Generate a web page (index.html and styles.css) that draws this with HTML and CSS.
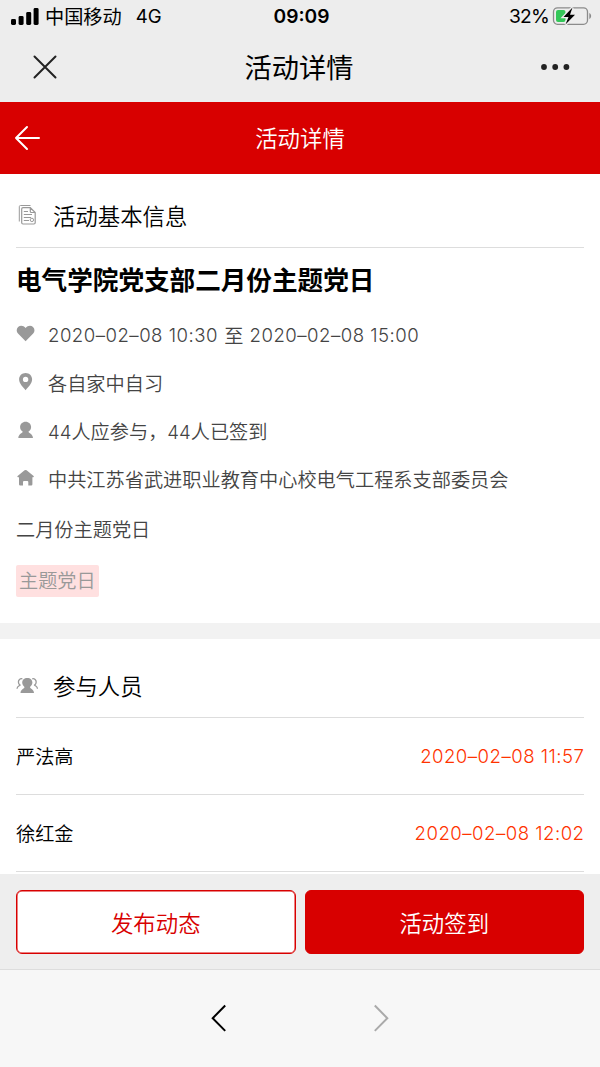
FILE: index.html
```html
<!DOCTYPE html>
<html lang="zh-CN">

<head>
  <meta charset="utf-8">
  <meta name="viewport" content="width=device-width, initial-scale=1">
  <title>活动详情</title>
  <link rel="stylesheet" href="styles.css">
</head>

<body>

  <div class="status-bar">
    <div class="status-left">
      <svg class="signal" width="28" height="17" viewBox="0 0 28 17">
        <rect x="0" y="11" width="5" height="6" rx="1.4" />
        <rect x="7.6" y="8" width="5" height="9" rx="1.4" />
        <rect x="15.2" y="4" width="5" height="13" rx="1.4" />
        <rect x="22.6" y="0" width="5" height="17" rx="1.4" />
      </svg>
      <span class="carrier">中国移动</span>
      <span class="network">4G</span>
    </div>
    <span class="clock">09:09</span>
    <div class="status-right">
      <span class="percent">32%</span>
      <svg class="battery" width="40" height="20" viewBox="0 0 40 20">
        <rect x="1.500" y="1.800" width="34" height="16.500" rx="4" fill="none" stroke="#8b8b8b" stroke-width="1.300" />
        <path d="M37.300 7c2.400 1 2.400 5 0 6z" fill="#8b8b8b" />
        <rect x="4" y="4" width="9.500" height="12" rx="2" fill="#34c759" />
        <path d="M20.500 1.500L11.500 11h5L13.500 18.500L23 8.800h-5z" fill="#000" stroke="#ededed" stroke-width="2.600" paint-order="stroke" />
      </svg>
    </div>
  </div>

  <div class="nav-bar">
    <svg width="26" height="26" viewBox="0 0 26 26">
      <path d="M2.500 2.500L23.500 23.500M23.500 2.500L2.500 23.500" fill="none" stroke="#222" stroke-width="2" stroke-linecap="round" />
    </svg>
    <h1>活动详情</h1>
    <svg width="30" height="8" viewBox="0 0 30 8" fill="#222">
      <circle cx="4" cy="4" r="2.900" />
      <circle cx="15.200" cy="4" r="2.900" />
      <circle cx="26.400" cy="4" r="2.900" />
    </svg>
  </div>

  <header class="page-header">
    <svg width="28" height="26" viewBox="0 0 28 26">
      <path d="M13 2L2 13L13 24M2 13H25" fill="none" stroke="#fff" stroke-width="2" stroke-linecap="round" stroke-linejoin="round" />
    </svg>
    <h2>活动详情</h2>
  </header>

  <main class="content">

    <section class="info">
      <div class="section-title">
        <svg width="22" height="22" viewBox="0 0 22 22" fill="none" stroke="#999" stroke-width="1">
          <path d="M3.300 17.500V2.700Q3.300 1.500 4.500 1.500H14.500" />
          <path d="M14.300 3.700H7Q5.700 3.700 5.700 5V18.800Q5.700 20 7 20H17.900Q19.200 20 19.200 18.800V8.500zM14.300 3.700V7.500Q14.300 8.500 15.300 8.500H19.200" stroke-width="1.200" />
          <path d="M7.800 7.500H12M7.800 10.500H16M7.800 13.500H15M7.800 16.500H13" />
          <circle cx="15.900" cy="15.900" r="1.700" />
        </svg>
        <h3>活动基本信息</h3>
      </div>

      <h4 class="event-name">电气学院党支部二月份主题党日</h4>

      <ul class="details">
        <li>
          <svg width="20" height="20" viewBox="0 0 20 20">
            <path d="M9.600 17.300L2 9.600C.200 7.700.300 4.700 2.100 3.100C4.300 1.200 7.400 1.500 9.600 4C11.800 1.500 15 1.200 17 3.100C18.900 4.800 19 7.700 17.200 9.600z" />
          </svg>
          <span class="num date">2020–02–08 10:30</span><span class="to">至</span><span class="num date">2020–02–08 15:00</span>
        </li>
        <li>
          <svg width="20" height="20" viewBox="0 0 20 20">
            <path fill-rule="evenodd" d="M9.600 1C5.900 1 3.100 3.900 3.100 7.300C3.100 11.300 6.500 14.700 9.600 18.200C12.700 14.700 16.100 11.300 16.100 7.300C16.100 3.900 13.300 1 9.600 1zM9.600 4.700a2.700 2.700 0 1 1 0 5.400a2.700 2.700 0 1 1 0-5.400z" />
          </svg>
          <span>各自家中自习</span>
        </li>
        <li>
          <svg width="20" height="20" viewBox="0 0 20 20">
            <path d="M9.600 1.700C6.400 1.700 4.100 4 4.100 7C4.100 9 5.100 10.800 6.800 11.700C6.400 13.300 2.600 13.600 2.300 18H17C16.700 13.600 12.800 13.300 12.400 11.700C14.100 10.800 15.100 9 15.100 7C15.100 4 12.800 1.700 9.600 1.700z" />
          </svg>
          <span><span class="num">44</span>人应参与，<span class="num">44</span>人已签到</span>
        </li>
        <li>
          <svg width="20" height="20" viewBox="0 0 20 20">
            <path d="M8.600 2.300Q9.600 1.500 10.600 2.300L17.600 7.900Q18.400 8.900 17.200 9.200H16.400V16.300Q16.400 17.500 15.200 17.500H12.300V14Q12.300 12.900 11.200 12.900H8.100Q7 12.900 7 14V17.500H4.200Q3 17.500 3 16.300V9.200H2Q.800 8.900 1.600 7.900z" />
          </svg>
          <span>中共江苏省武进职业教育中心校电气工程系支部委员会</span>
        </li>
      </ul>

      <p class="summary">二月份主题党日</p>
      <span class="tag">主题党日</span>
    </section>

    <section class="members">
      <div class="section-title">
        <svg width="22" height="22" viewBox="0 0 22 22">
          <path d="M11.300 4C8.200 4 6.200 6 6.200 8.600C6.200 10.500 7.200 12 8.500 12.900C8.300 14.800 4.600 15 4.500 19H18C17.900 15 14.200 14.800 14 12.900C15.300 12 16.400 10.500 16.400 8.600C16.400 6 14.400 4 11.300 4z" fill="#999" />
          <path d="M6.400 4.800C4 4.300 2.400 5.800 2.400 8.100C2.400 9.800 3.300 10.600 4 11.100C3.300 12 1.300 12.100 1 14.800M16.200 4.800C18.600 4.300 20.200 5.800 20.200 8.100C20.200 9.800 19.300 10.600 18.600 11.100C19.300 12 21.200 12.100 21.500 14.800" fill="none" stroke="#999" stroke-width="1.300" />
        </svg>
        <h3>参与人员</h3>
      </div>
      <ul class="member-list">
        <li><span>严法高</span><span class="num date">2020–02–08 11:57</span></li>
        <li><span>徐红金</span><span class="num date">2020–02–08 12:02</span></li>
      </ul>
    </section>

  </main>

  <div class="actions">
    <button class="btn btn-outline">发布动态</button>
    <button class="btn btn-primary">活动签到</button>
  </div>

  <footer class="browser-bar">
    <svg width="18" height="30" viewBox="0 0 18 30">
      <path d="M15.200 2.500L2.700 15.200L15.200 27.900" fill="none" stroke="#000" stroke-width="2" />
    </svg>
    <svg width="18" height="30" viewBox="0 0 18 30">
      <path d="M2.800 2.500L15.300 15.200L2.800 27.900" fill="none" stroke="#aaa" stroke-width="2" />
    </svg>
  </footer>

</body>

</html>
```

FILE: styles.css
```css
/* ******************** global ******************* */

* {
  box-sizing: border-box;
}

html,
body {
  margin: 0;
  padding: 0;
}

body {
  display: flex;
  flex-direction: column;
  height: 1067px;
  overflow: hidden;
  background-color: white;
  color: black;
  font-family: "Noto Sans CJK SC", sans-serif;
  font-weight: 350;
}

h1,
h2,
h3,
h4,
p,
ul {
  margin: 0;
  padding: 0;
  font-weight: inherit;
  list-style: none;
}

svg {
  display: block;
  flex: none;
}

.num {
  font-family: Inter, "Noto Sans CJK SC", sans-serif;
  font-size: 18.6px;
  font-weight: 300;
}

.date {
  margin-right: -0.5px;
  letter-spacing: 0.48px;
}

/* ******************** top bars ******************* */

.status-bar {
  display: grid;
  grid-template-columns: 1fr auto 1fr;
  align-items: center;
  flex: none;
  height: 34px;
  padding: 0 8px 2px 11px;
  background-color: #ededed;
  font-family: Inter, "Noto Sans CJK SC", sans-serif;
  font-size: 19.2px;
  font-weight: 400;
}

.status-left,
.status-right {
  display: flex;
  align-items: center;
}

.status-right {
  justify-content: flex-end;
  gap: 3px;
}

.percent {
  letter-spacing: -0.8px;
}

.carrier {
  margin-left: 6px;
}

.network {
  margin-left: 14px;
  font-size: 18.6px;
}

.clock {
  font-weight: 600;
}

.nav-bar {
  display: flex;
  align-items: center;
  justify-content: space-between;
  flex: none;
  height: 68px;
  padding: 0 30px 2px 32px;
  background-color: #ededed;
}

.nav-bar h1 {
  padding-bottom: 2px;
  font-size: 27.2px;
  font-weight: 400;
}

.page-header {
  display: grid;
  grid-template-columns: 28px 1fr 28px;
  align-items: center;
  flex: none;
  height: 72px;
  padding: 0 14px;
  background-color: #d80000;
  color: white;
}

.page-header h2 {
  padding-bottom: 2px;
  font-size: 22.4px;
  text-align: center;
}

/* ******************** content ******************* */

.content {
  flex: none;
  height: 700px;
  overflow: hidden;
}

.info {
  height: 465px;
  padding: 9px 16px 0;
  border-bottom: 16px solid #f2f2f2;
}

.section-title {
  display: flex;
  align-items: center;
  gap: 15px;
  height: 65px;
  border-bottom: 1px solid #ddd;
}

.section-title h3 {
  font-size: 22.4px;
}

.event-name {
  height: 64px;
  font-size: 25.6px;
  font-weight: 700;
  line-height: 61px;
}

.details,
.summary,
.tag {
  color: #444;
  font-size: 19.2px;
}

.details li {
  display: flex;
  align-items: center;
  height: 48px;
  padding-bottom: 2px;
}

.details svg {
  margin: 0 12px 2px 0;
  fill: #999;
}

.to {
  margin: 0 6px 0 7px;
}

.summary {
  line-height: 50px;
}

.tag {
  display: inline-block;
  height: 32px;
  margin-top: 11px;
  padding: 0 3px;
  border-radius: 2px;
  background-color: #ffe0e0;
  color: #999;
  line-height: 31px;
}

.members {
  padding: 14px 16px 0;
}

.member-list li {
  display: flex;
  align-items: center;
  justify-content: space-between;
  height: 77px;
  border-bottom: 1px solid #ddd;
  font-size: 19.2px;
}

.member-list .num {
  color: #ff3300;
}

/* ******************** bottom bars ******************* */

.actions {
  display: flex;
  gap: 9px;
  flex: none;
  height: 95px;
  padding: 16px 16px 15px;
  background-color: #eee;
}

.btn {
  flex: 1;
  padding: 0;
  border: 1px solid #d80000;
  border-radius: 6px;
  font-family: inherit;
  font-size: 22.4px;
  font-weight: inherit;
}

.btn-outline {
  background-color: white;
  box-shadow: inset 0 0 0 0.5px #d80000;
  color: #d80000;
}

.btn-primary {
  background-color: #d80000;
  color: white;
}

.browser-bar {
  display: flex;
  justify-content: center;
  gap: 144px;
  flex: 1;
  padding-top: 33px;
  border-top: 1px solid #ddd;
  background-color: #f7f7f7;
}
```
